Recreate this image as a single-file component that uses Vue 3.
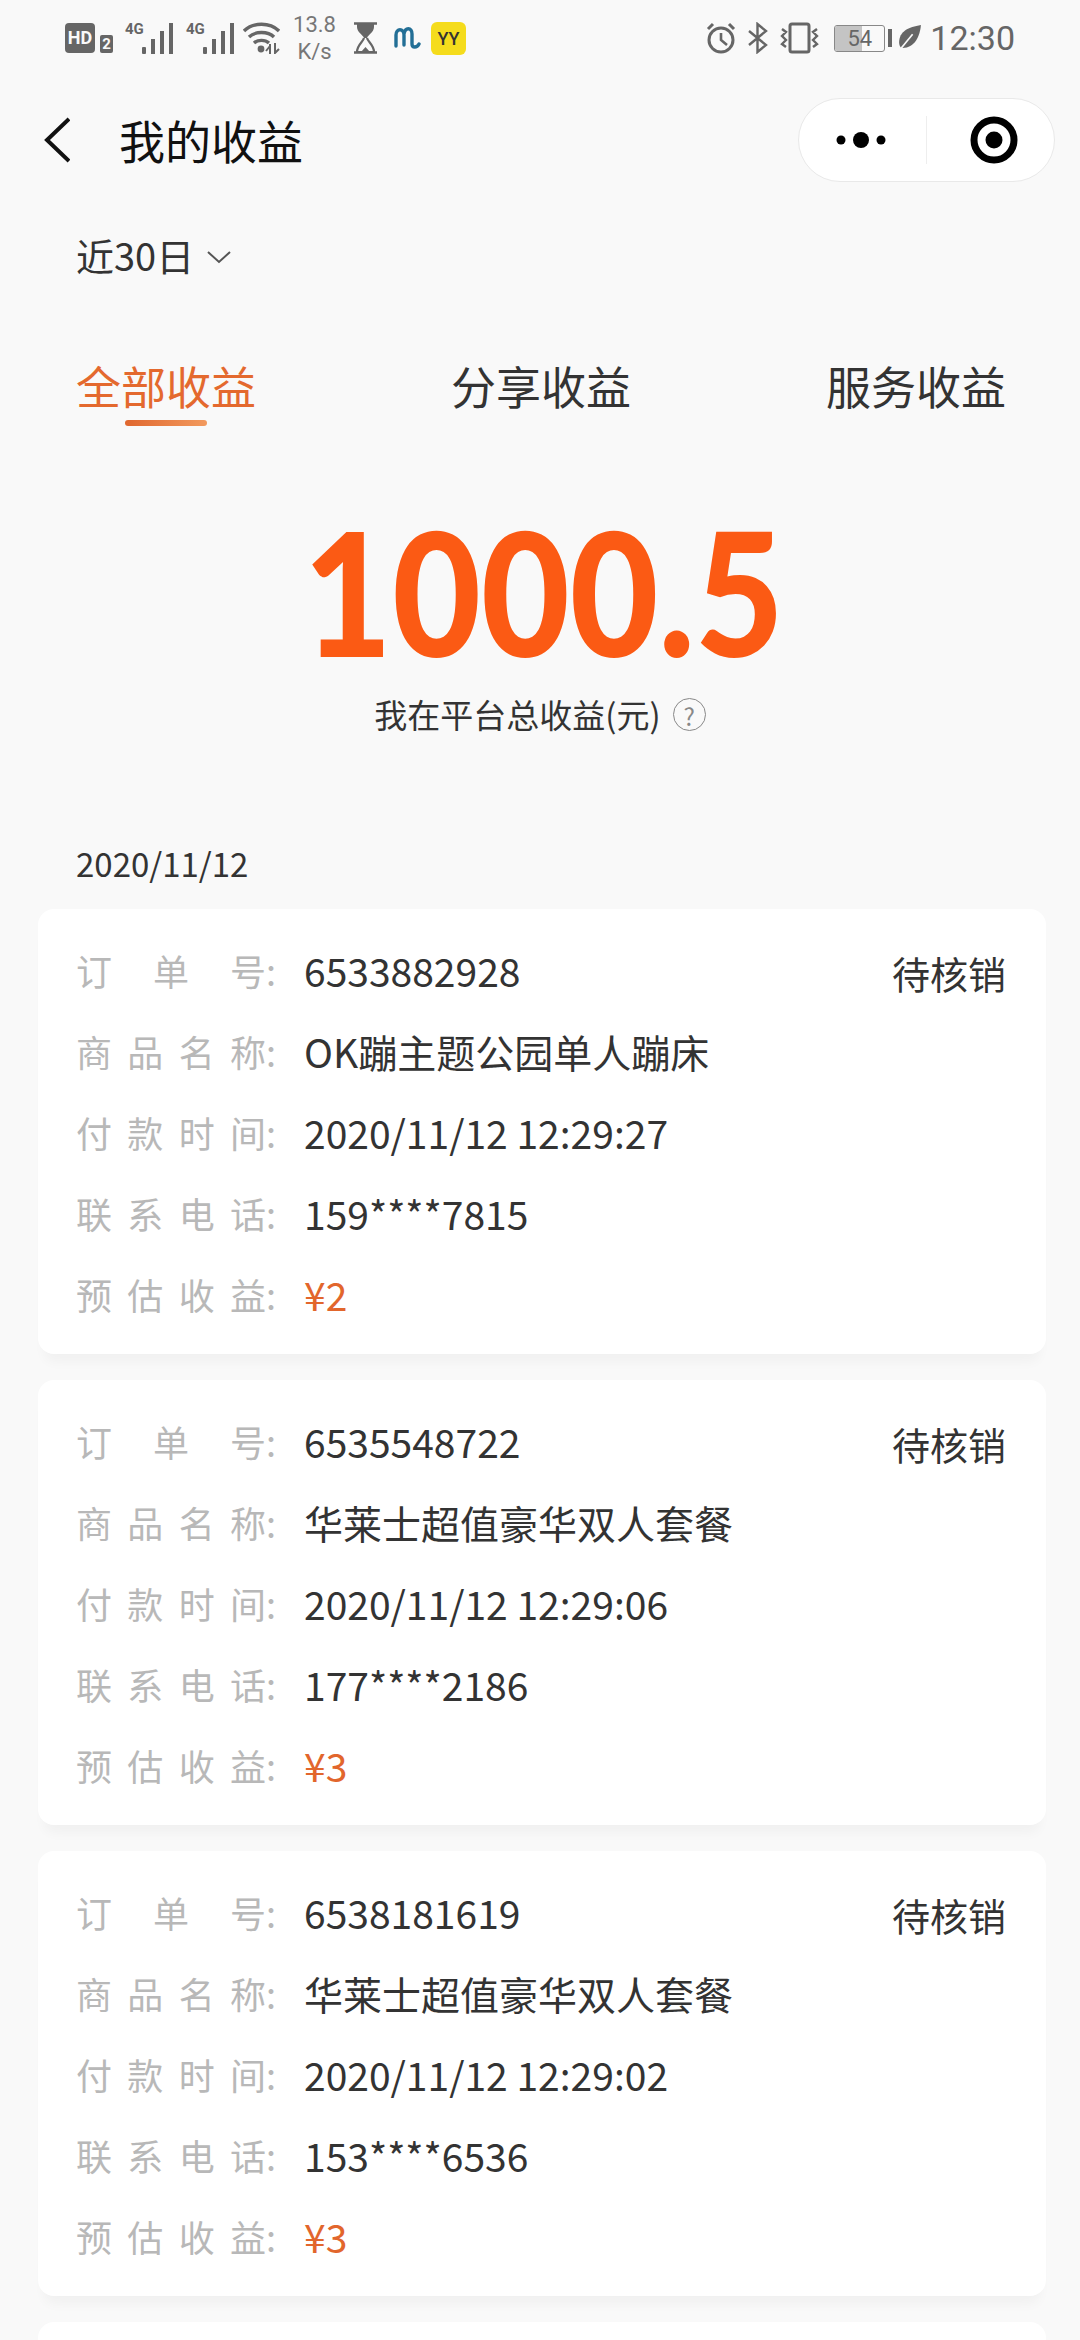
<template>
  <div class="page">
    <div class="status-bar">
      <div class="status-left">
        <div class="hd"><span class="hd-box">HD</span><span class="hd-sim">2</span></div>
        <div v-for="n in 2" :key="n" class="signal">
          <span class="signal-4g">4G</span>
          <svg width="32" height="31" viewBox="0 0 32 31">
            <rect x="0" y="24" width="4" height="7" rx="1" fill="#666" />
            <rect x="9" y="16" width="4" height="15" fill="#666" />
            <rect x="18" y="8" width="4" height="23" fill="#666" />
            <rect x="27" y="0" width="4" height="31" fill="#666" />
          </svg>
        </div>
        <svg class="wifi" width="37" height="32" viewBox="0 0 37 32">
          <path d="M1 9 C10 0 27 0 36 9" fill="none" stroke="#666" stroke-width="3.400" />
          <path d="M6 15 C12 9 25 9 31 15" fill="none" stroke="#666" stroke-width="3.400" />
          <path d="M11 21 C15 17.500 22 17.500 26 21" fill="none" stroke="#666" stroke-width="3.400" />
          <circle cx="18" cy="27" r="3.400" fill="#666" />
          <path d="M27 22 L27 32 M23 29 L27 24 M32 21 L32 31 L36 27" fill="none" stroke="#666" stroke-width="2" />
        </svg>
        <div class="speed"><span>13.8</span><span>K/s</span></div>
        <svg class="hourglass" width="23" height="32" viewBox="0 0 23 32">
          <path d="M0 1.500 H23 M0 30.500 H23" stroke="#666" stroke-width="2.600" />
          <path d="M3 2 H20 V5 C20 10 14 13 13 16 H10 C9 13 3 10 3 5 Z" fill="#666" />
          <path d="M10 16 C9 20 3 23 3 30 H20 C20 23 14 20 13 16" fill="none" stroke="#666" stroke-width="2.200" />
          <path d="M7 30 L11.500 25 L16 30 Z" fill="#666" />
        </svg>
        <svg class="m-logo" width="27" height="24" viewBox="0 0 27 24">
          <path d="M2 20 V9 C2 2 10 2 10 9 V19 M10 8 C11 1 18 1 18 8 V18 C18 22 23 22 25 18" fill="none" stroke="#236f96" stroke-width="3.400" stroke-linecap="round" />
        </svg>
        <div class="yy">YY</div>
      </div>
      <div class="status-right">
        <svg width="30" height="32" viewBox="0 0 30 32">
          <circle cx="15" cy="18" r="12" fill="none" stroke="#666" stroke-width="3" />
          <path d="M15 11 V18 L21 23" fill="none" stroke="#666" stroke-width="2.600" />
          <path d="M2 7 L7 2 M23 2 L28 7" stroke="#666" stroke-width="3" />
        </svg>
        <svg class="bt" width="20" height="32" viewBox="0 0 20 32">
          <path d="M1 9 L18 23 L9.500 30 V2 L18 9 L1 23" fill="none" stroke="#666" stroke-width="2.400" />
        </svg>
        <svg class="vibrate" width="40" height="32" viewBox="0 0 40 32">
          <rect x="10" y="2" width="19" height="28" rx="2" fill="none" stroke="#666" stroke-width="3" />
          <path d="M2 7 L6 10 L2 14 L6 18 L2 22 L6 25 M37 7 L33 10 L37 14 L33 18 L37 22 L33 25" fill="none" stroke="#666" stroke-width="2.400" />
        </svg>
        <div class="battery">
          <div class="battery-level"></div>
          <span class="battery-text">54</span>
        </div>
        <div class="battery-nub"></div>
        <svg class="leaf" width="23" height="27" viewBox="0 0 22 26">
          <path d="M22 0 C10 2 1 6 1 17 C1 19 2 21 3 22 C15 23 21 12 22 0 Z" fill="#666" />
          <path d="M0 26 L14 9" stroke="#f9f9f9" stroke-width="1.600" />
        </svg>
        <span class="clock">12:30</span>
      </div>
    </div>

    <div class="nav">
      <svg class="back" width="26" height="46" viewBox="0 0 26 46">
        <path d="M25 2 L3 23 L25 44" fill="none" stroke="#111" stroke-width="4" />
      </svg>
      <div class="nav-title">我的收益</div>
      <div class="capsule">
        <svg width="60" height="20" viewBox="0 0 60 20">
          <circle cx="10" cy="10" r="4.500" fill="#000" />
          <circle cx="30" cy="10" r="8" fill="#000" />
          <circle cx="50" cy="10" r="4.500" fill="#000" />
        </svg>
        <div class="capsule-line"></div>
        <svg width="52" height="52" viewBox="0 0 52 52">
          <circle cx="26" cy="26" r="20" fill="none" stroke="#000" stroke-width="7" />
          <circle cx="26" cy="26" r="8.500" fill="#000" />
        </svg>
      </div>
    </div>

    <div class="filter">
      <span>近30日</span>
      <svg class="chevron" width="26" height="14" viewBox="0 0 26 14">
        <path d="M2 2 L13 12 L24 2" fill="none" stroke="#555" stroke-width="2" />
      </svg>
    </div>

    <div class="tabs">
      <div
        v-for="(tab, index) in tabs"
        :key="tab"
        :class="['tab', { active: index === 0 }]"
      >
        {{ tab }}
      </div>
    </div>

    <div class="total">1000.5</div>
    <div class="total-label">
      <span>我在平台总收益(元)</span>
      <span class="help">?</span>
    </div>

    <div class="date">2020/11/12</div>

    <div class="list">
      <div v-for="order in orders" :key="order.no" class="card">
        <div class="row">
          <span class="label"><span class="label-text">订单号</span>:</span>
          <span class="value">{{ order.no }}</span>
          <span class="state">待核销</span>
        </div>
        <div class="row">
          <span class="label"><span class="label-text">商品名称</span>:</span>
          <span class="value">{{ order.name }}</span>
        </div>
        <div class="row">
          <span class="label"><span class="label-text">付款时间</span>:</span>
          <span class="value">{{ order.time }}</span>
        </div>
        <div class="row">
          <span class="label"><span class="label-text">联系电话</span>:</span>
          <span class="value">{{ order.phone }}</span>
        </div>
        <div class="row">
          <span class="label"><span class="label-text">预估收益</span>:</span>
          <span class="value money">{{ order.money }}</span>
        </div>
      </div>
      <div class="card card-next"></div>
    </div>
  </div>
</template>

<script setup>
const tabs = ['全部收益', '分享收益', '服务收益']

const orders = [
  {
    no: '6533882928',
    name: 'OK蹦主题公园单人蹦床',
    time: '2020/11/12 12:29:27',
    phone: '159****7815',
    money: '¥2'
  },
  {
    no: '6535548722',
    name: '华莱士超值豪华双人套餐',
    time: '2020/11/12 12:29:06',
    phone: '177****2186',
    money: '¥3'
  },
  {
    no: '6538181619',
    name: '华莱士超值豪华双人套餐',
    time: '2020/11/12 12:29:02',
    phone: '153****6536',
    money: '¥3'
  }
]
</script>

<style>
html,
body {
  margin: 0;
  background: #f9f9f9;
}
</style>

<style scoped>
.page {
  width: 1080px;
  height: 2340px;
  overflow: hidden;
  background: #f9f9f9;
  color: #333;
  font-family: "Noto Sans CJK SC", "Noto Sans", sans-serif;
}

/* ---------- status bar ---------- */
.status-bar {
  height: 76px;
  display: flex;
  justify-content: space-between;
  align-items: center;
  padding: 0 65px 0 65px;
}
.status-left,
.status-right {
  display: flex;
  align-items: center;
}
.hd {
  display: flex;
  align-items: flex-end;
  font-family: "Roboto", sans-serif;
  font-weight: 700;
}
.hd-box {
  width: 30px;
  height: 30px;
  line-height: 30px;
  border-radius: 4px;
  background: #666;
  color: #f9f9f9;
  font-size: 18px;
  text-align: center;
}
.hd-sim {
  width: 13px;
  height: 18px;
  line-height: 18px;
  margin-left: 5px;
  border-radius: 2px;
  background: #666;
  color: #f9f9f9;
  font-size: 15px;
  text-align: center;
}
.signal {
  position: relative;
  width: 49px;
  height: 31px;
  margin-left: 12px;
  display: flex;
  justify-content: flex-end;
}
.signal-4g {
  position: absolute;
  left: 0;
  top: -3px;
  color: #666;
  font-family: "Roboto", sans-serif;
  font-size: 15px;
  font-weight: 700;
  line-height: 18px;
}
.wifi {
  margin-left: 8px;
}
.speed {
  width: 43px;
  margin-left: 13px;
  display: flex;
  flex-direction: column;
  align-items: center;
  color: #777;
  font-family: "Roboto", sans-serif;
  font-size: 22px;
  line-height: 27px;
}
.hourglass {
  margin-left: 18px;
}
.m-logo {
  margin-left: 17px;
}
.yy {
  width: 35px;
  height: 33px;
  line-height: 33px;
  margin-left: 10px;
  border-radius: 6px;
  background: #f5dc1c;
  color: #333;
  font-family: "Roboto", sans-serif;
  font-size: 18px;
  font-weight: 500;
  text-align: center;
}
.bt {
  margin-left: 12px;
}
.vibrate {
  margin-left: 12px;
}
.battery {
  position: relative;
  width: 51px;
  height: 27px;
  margin-left: 14px;
  border: 1px solid #888;
  border-radius: 3px;
  box-sizing: border-box;
  overflow: hidden;
}
.battery-level {
  width: 54%;
  height: 100%;
  background: #c4c4c4;
}
.battery-text {
  position: absolute;
  left: 0;
  right: 0;
  top: 0;
  color: #666;
  font-family: "Roboto", sans-serif;
  font-size: 22px;
  line-height: 25px;
  text-align: center;
}
.battery-nub {
  width: 4px;
  height: 18px;
  margin-left: 3px;
  background: #666;
}
.leaf {
  margin-left: 6px;
}
.clock {
  margin-left: 9px;
  color: #666;
  font-family: "Roboto", sans-serif;
  font-size: 34px;
  line-height: 40px;
}

/* ---------- navigation ---------- */
.nav {
  height: 84px;
  margin-top: 22px;
  display: flex;
  align-items: center;
  padding-left: 44px;
}
.back {
  flex: none;
}
.nav-title {
  margin-left: 49px;
  padding-bottom: 3px;
  color: #111;
  font-size: 46px;
  line-height: 60px;
}
.capsule {
  width: 257px;
  height: 84px;
  margin-left: auto;
  margin-right: 25px;
  padding-left: 32px;
  display: flex;
  align-items: center;
  box-sizing: border-box;
  border: 1px solid #e9e9e9;
  border-radius: 42px;
  background: #fff;
}
.capsule-line {
  width: 1px;
  height: 48px;
  margin: 0 41px 0 35px;
  background: #eee;
}

/* ---------- filter + tabs ---------- */
.filter {
  margin-top: 47px;
  padding-left: 76px;
  display: flex;
  align-items: center;
  font-size: 38px;
  line-height: 52px;
}
.chevron {
  margin: 4px 0 0 12px;
}
.tabs {
  margin-top: 75px;
  padding: 0 74px 0 76px;
  display: flex;
  justify-content: space-between;
}
.tab {
  position: relative;
  font-size: 45px;
  line-height: 60px;
}
.tab.active {
  color: #e4692e;
}
.tab.active::after {
  content: "";
  position: absolute;
  left: 49px;
  bottom: -10px;
  width: 82px;
  height: 6px;
  border-radius: 3px;
  background: linear-gradient(90deg, #e0672f, #f29a5e);
}

/* ---------- total ---------- */
.total {
  margin-top: 85px;
  padding-left: 8px;
  color: #fb5a14;
  font-family: "Lato", sans-serif;
  font-size: 172px;
  font-weight: 900;
  line-height: 180px;
  text-align: center;
  transform: scaleX(0.89);
}
.total-label {
  margin-top: 11px;
  display: flex;
  justify-content: center;
  align-items: center;
  gap: 12px;
  font-size: 33px;
  line-height: 44px;
}
.help {
  width: 33px;
  height: 33px;
  line-height: 33px;
  border: 1px solid #888;
  border-radius: 50%;
  box-sizing: border-box;
  color: #888;
  font-size: 24px;
  text-align: center;
}

/* ---------- order cards ---------- */
.date {
  margin-top: 105px;
  padding-left: 76px;
  font-size: 33px;
  line-height: 44px;
}
.list {
  margin-top: 24px;
  padding: 0 34px 0 38px;
  display: flex;
  flex-direction: column;
  gap: 26px;
}
.card {
  padding: 20px 40px 20px 38px;
  border-radius: 16px;
  background: #fff;
  box-shadow: 0 14px 12px -6px rgba(0, 0, 0, 0.035);
}
.card-next {
  height: 445px;
  flex: none;
}
.row {
  height: 81px;
  display: flex;
  align-items: center;
}
.label {
  width: 228px;
  flex: none;
  display: flex;
  color: #b8b8b8;
  font-size: 36px;
}
.label-text {
  width: 190px;
  text-align: justify;
  text-align-last: justify;
}
.value {
  color: #333;
  font-size: 39px;
}
.money {
  color: #e2662c;
}
.state {
  margin-left: auto;
  padding-top: 6px;
  font-size: 38px;
}
</style>
